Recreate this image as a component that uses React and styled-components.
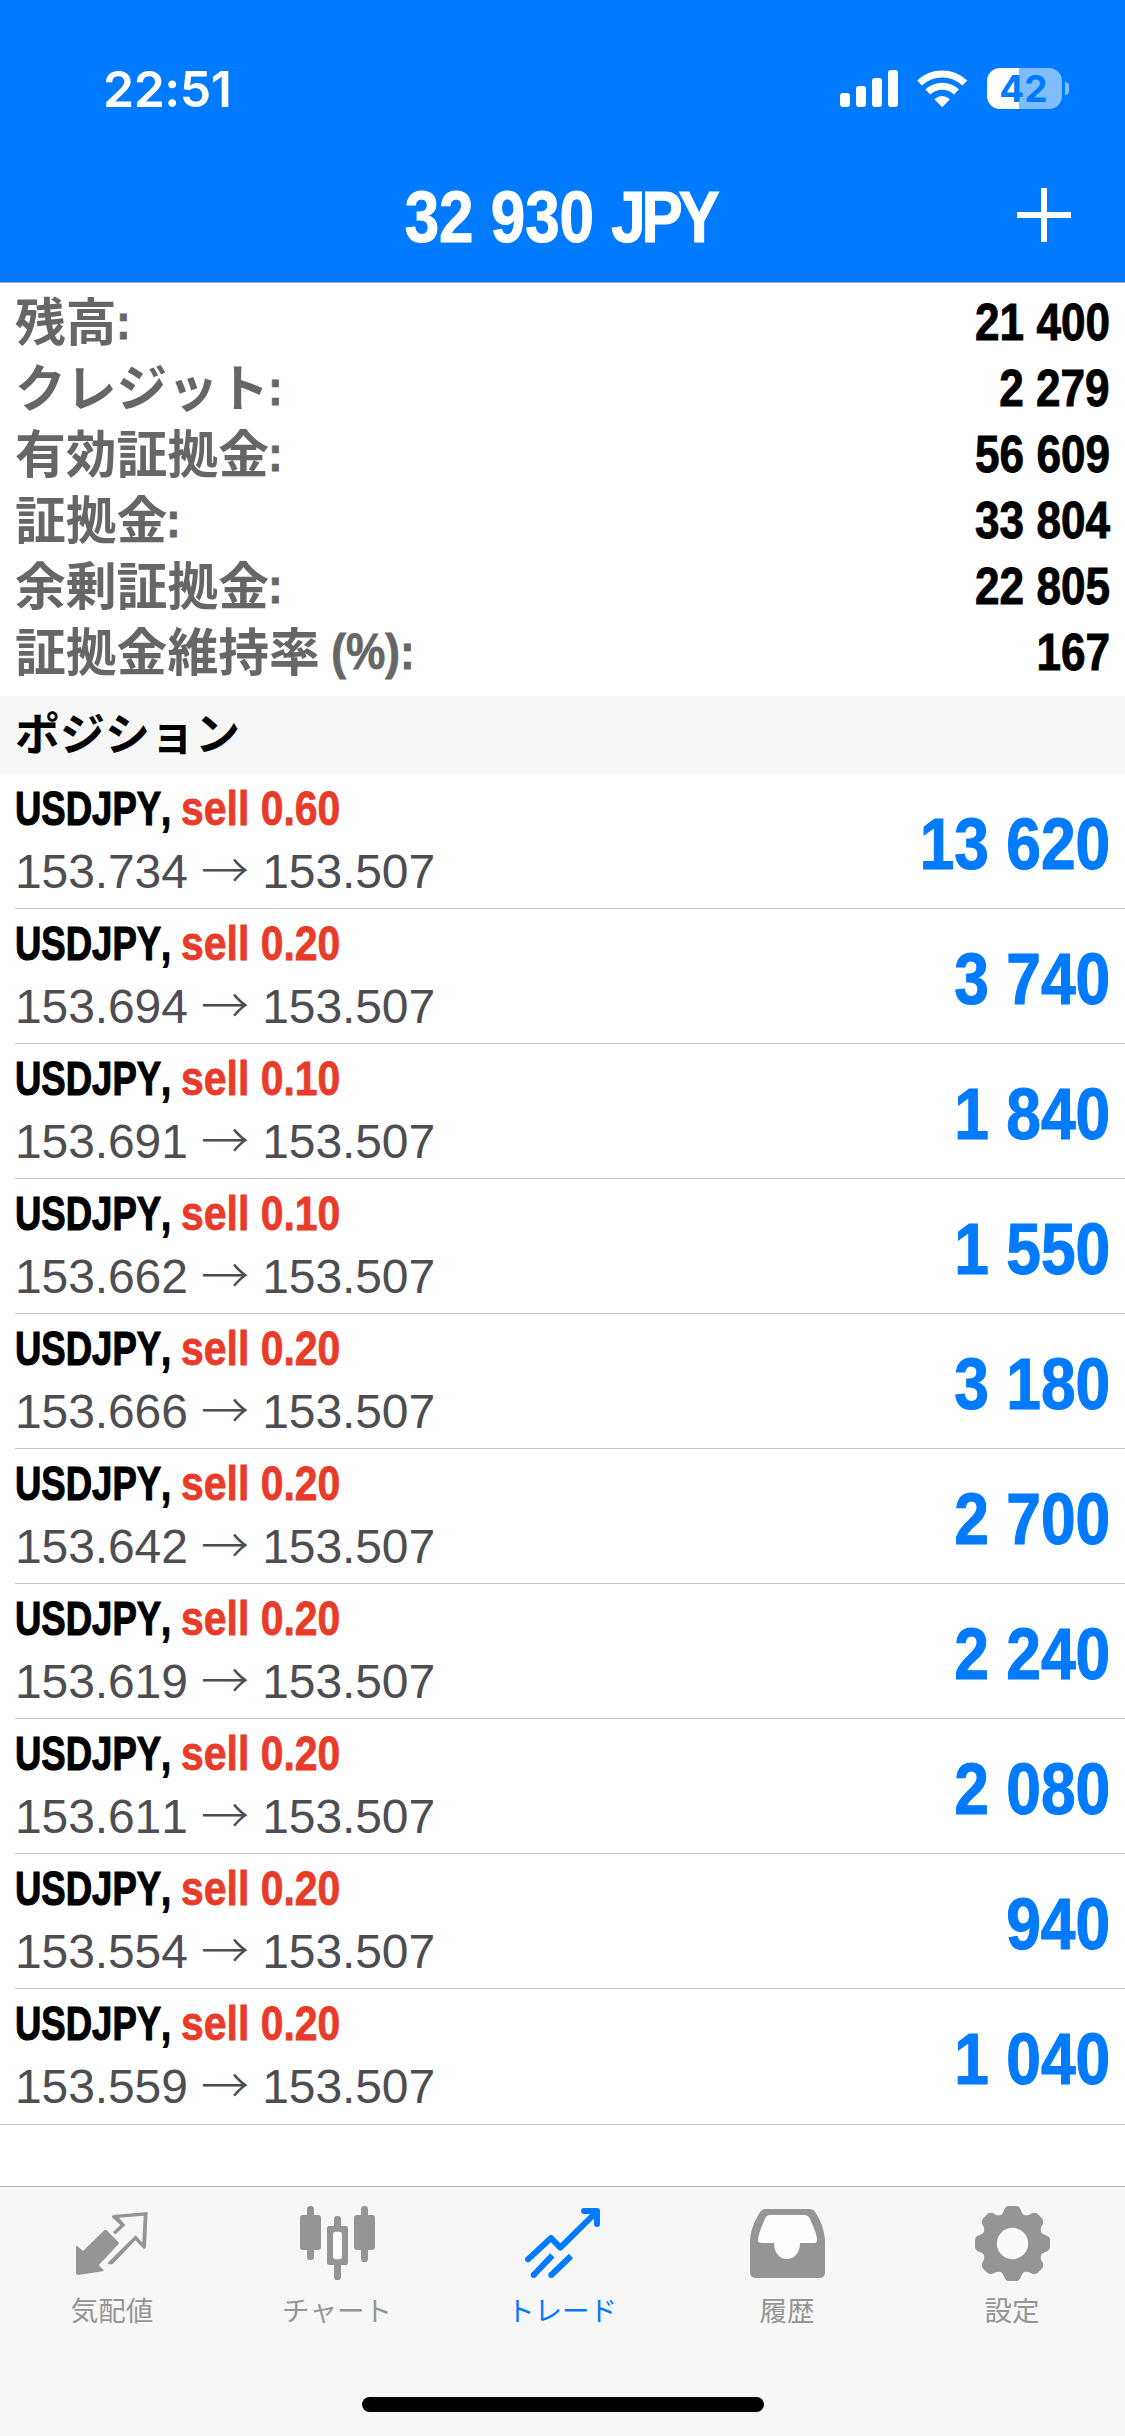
import React from "react";
import styled, { createGlobalStyle } from "styled-components";

const account = [
  { label: "残高", suffix: ":", value: "21 400" },
  { label: "クレジット", suffix: ":", value: "2 279" },
  { label: "有効証拠金", suffix: ":", value: "56 609" },
  { label: "証拠金", suffix: ":", value: "33 804" },
  { label: "余剰証拠金", suffix: ":", value: "22 805" },
  { label: "証拠金維持率", suffix: " (%):", value: "167" }
];

const positions = [
  { volume: "0.60", open: "153.734", profit: "13 620" },
  { volume: "0.20", open: "153.694", profit: "3 740" },
  { volume: "0.10", open: "153.691", profit: "1 840" },
  { volume: "0.10", open: "153.662", profit: "1 550" },
  { volume: "0.20", open: "153.666", profit: "3 180" },
  { volume: "0.20", open: "153.642", profit: "2 700" },
  { volume: "0.20", open: "153.619", profit: "2 240" },
  { volume: "0.20", open: "153.611", profit: "2 080" },
  { volume: "0.20", open: "153.554", profit: "940" },
  { volume: "0.20", open: "153.559", profit: "1 040" }
];

const GlobalStyle = createGlobalStyle`
  body {
    margin: 0;
    background-color: #fff;
  }

  * {
    box-sizing: border-box;
  }
`;

const SignalIcon = () => (
  <svg width="58" height="37" viewBox="0 0 58 37" fill="#fff">
    <rect x="0" y="23" width="10" height="14" rx="3" />
    <rect x="16" y="16" width="10" height="21" rx="3" />
    <rect x="32" y="8" width="10" height="29" rx="3" />
    <rect x="48" y="0" width="10" height="37" rx="3" />
  </svg>
);

const WifiIcon = () => (
  <svg width="51" height="38" viewBox="0 0 153 114" fill="none" stroke="#fff">
    <path d="M7.5 39A99 99 0 0 1 143.5 39" strokeWidth="21" />
    <path d="M32.5 66A62 62 0 0 1 118.5 66" strokeWidth="21" />
    <path
      d="M75.5 109L55 88Q75 72 96 88Z"
      fill="#fff"
      strokeWidth="4"
      strokeLinejoin="round"
    />
  </svg>
);

const QuotesIcon = () => (
  <svg width="75" height="75" viewBox="0 0 225 225" fill="currentColor">
    <path d="M88 73Q91 70 95 73L130 108Q133 112 130 115L71 178L85 191Q87 195 83 196L10 207Q3 207 3 200V122Q5 118 9 122L24 135Z" />
    <path d="M114 27L218 18L213 124Q211 129 206 128L181 103L114 173Q107 178 97 172L182 88L202 110L206 29L132 35L151 57L122 85Q117 85 114 78L136 57L111 34Q110 30 114 27Z" />
  </svg>
);

const ChartIcon = () => (
  <svg width="75" height="75" viewBox="0 0 225 225" fill="currentColor">
    <rect x="21" y="0" width="21" height="162" rx="10" />
    <rect x="0" y="27" width="63" height="105" rx="9" />
    <rect x="102" y="30" width="21" height="192" rx="10" />
    <rect x="81" y="60" width="63" height="117" rx="7" />
    <rect x="99" y="77" width="27" height="83" rx="9" fill="#fff" />
    <rect x="183" y="0" width="21" height="168" rx="10" />
    <rect x="162" y="27" width="63" height="105" rx="9" />
  </svg>
);

const TradeIcon = () => (
  <svg
    width="75"
    height="75"
    viewBox="0 0 225 225"
    fill="none"
    stroke="currentColor"
    strokeWidth="18"
  >
    <path
      d="M9 160L78 96L106 125L210 22M177 15H216V54"
      strokeLinecap="round"
      strokeLinejoin="round"
    />
    <path d="M26 207L82 148M79 207L138 150" />
    <circle cx="26" cy="207" r="9" fill="currentColor" stroke="none" />
    <circle cx="79" cy="207" r="9" fill="currentColor" stroke="none" />
  </svg>
);

const HistoryIcon = () => (
  <svg width="75" height="75" viewBox="0 0 225 225">
    <path
      fill="currentColor"
      d="M48 9H180Q190 9 195 17C213 45 225 75 225 110V199Q225 216 208 216H17Q0 216 0 199V110C0 75 13 45 31 17Q37 9 48 9Z"
    />
    <path
      fill="#fdfdfd"
      d="M60 27H162Q174 27 179 37C188 58 198 78 201 97Q203 111 192 111H150C150 142 132 159 111 159C90 159 72 142 72 111H35Q22 111 24 100C27 78 37 58 45 38Q49 27 60 27Z"
    />
  </svg>
);

const SettingsIcon = () => (
  <svg width="75" height="75" viewBox="0 0 225 225" fill="currentColor">
    {[0, 90, 180, 270].map(angle => (
      <path
        key={angle}
        transform={`rotate(${angle} 112.5 112.5)`}
        d="M104 118V0H124Q131 0 135 7L139 16Q142 24 147 27Q156 29 163 26Q172 19 181 21Q187 22 190 26L199 35Q203 38 204 44Q206 53 199 62Q196 69 198 78Q201 83 209 86L218 90Q225 94 225 101V118Z"
      />
    ))}
    <circle cx="112.5" cy="112.5" r="47" fill="#fafafa" />
  </svg>
);

const tabs = [
  { label: "気配値", Icon: QuotesIcon },
  { label: "チャート", Icon: ChartIcon },
  { label: "トレード", Icon: TradeIcon, active: true },
  { label: "履歴", Icon: HistoryIcon },
  { label: "設定", Icon: SettingsIcon }
];

const App = () => (
  <Screen>
    <GlobalStyle />
    <Header>
      <StatusBar>
        <Time>22:51</Time>
        <StatusIcons>
          <SignalIcon />
          <WifiIcon />
          <Battery>
            <BatteryBody>42</BatteryBody>
            <BatteryCap />
          </Battery>
        </StatusIcons>
      </StatusBar>
      <NavBar>
        <Title>
          32 930 <Currency>JPY</Currency>
        </Title>
        <AddButton aria-label="add">
          <svg width="54" height="54" viewBox="0 0 54 54">
            <path d="M27 0V54M0 27H54" stroke="#fff" strokeWidth="6" />
          </svg>
        </AddButton>
      </NavBar>
    </Header>
    <Account>
      {account.map(({ label, suffix, value }) => (
        <AccountRow key={label}>
          <Label>
            {label}
            <Suffix>{suffix}</Suffix>
          </Label>
          <Value>{value}</Value>
        </AccountRow>
      ))}
    </Account>
    <SectionTitle>ポジション</SectionTitle>
    <Positions>
      {positions.map(({ volume, open, profit }) => (
        <Position key={open}>
          <div>
            <Deal>
              <Symbol>USDJPY,</Symbol>
              <Side>sell {volume}</Side>
            </Deal>
            <Prices>
              {open} <Arrow>→</Arrow> 153.507
            </Prices>
          </div>
          <Profit>{profit}</Profit>
        </Position>
      ))}
    </Positions>
    <TabBar>
      <Tabs>
        {tabs.map(({ label, Icon, active }) => (
          <Tab key={label} $active={active}>
            <Icon />
            <TabLabel>{label}</TabLabel>
          </Tab>
        ))}
      </Tabs>
      <HomeIndicator />
    </TabBar>
  </Screen>
);

const Screen = styled.div`
  width: 1125px;
  height: 2436px;
  display: flex;
  flex-direction: column;
  overflow: hidden;
  background-color: #fff;
  font-family: "Liberation Sans", "Noto Sans CJK JP", sans-serif;
  font-kerning: none;
`;

const Header = styled.header`
  height: 283px;
  flex: none;
  background-color: #007aff;
  border-bottom: 1px solid #a7aaae;
  color: #fff;
`;

const StatusBar = styled.div`
  height: 148px;
  display: flex;
  justify-content: space-between;
  padding: 68px 56px 0 103px;
`;

const Time = styled.span`
  font-family: Inter, sans-serif;
  font-size: 50px;
  font-weight: 600;
  line-height: 42px;
  letter-spacing: -0.5px;
`;

const StatusIcons = styled.div`
  height: 41px;
  display: flex;
  align-items: center;
  gap: 19px;
`;

const Battery = styled.div`
  display: flex;
  align-items: center;
  gap: 3px;
`;

const BatteryBody = styled.div`
  width: 75px;
  height: 41px;
  padding-right: 2px;
  border-radius: 13px;
  background: linear-gradient(90deg, #fff 32px, #80bdff 32px);
  color: #007aff;
  font-family: Inter, sans-serif;
  font-size: 37px;
  font-weight: 700;
  line-height: 41px;
  text-align: center;
`;

const BatteryCap = styled.div`
  width: 4px;
  height: 13px;
  border-radius: 0 4px 4px 0;
  background-color: #80bdff;
`;

const NavBar = styled.div`
  display: grid;
  grid-template-columns: 1fr auto 1fr;
  align-items: center;
  height: 134px;
  padding: 0 54px;
`;

const Title = styled.h1`
  grid-column: 2;
  margin: 0;
  padding: 5px 5px 0 0;
  font-size: 72px;
  font-weight: 700;
  line-height: 129px;
  transform: scaleX(0.86);
  -webkit-text-stroke: 1.1px currentColor;
`;

const Currency = styled.span`
  letter-spacing: -5px;
`;

const AddButton = styled.button`
  justify-self: end;
  height: 54px;
  padding: 0;
  border: 0;
  background: none;
`;

const Account = styled.section`
  height: 413px;
  flex: none;
  padding: 7px 15px 0;
`;

const AccountRow = styled.div`
  height: 66px;
  display: flex;
  justify-content: space-between;
  line-height: 66px;
`;

const Label = styled.span`
  display: flex;
  color: #666;
  font-family: "Noto Sans CJK JP", sans-serif;
  font-size: 50.8px;
  font-weight: 700;
  line-height: 59px;
`;

const Suffix = styled.span`
  margin-left: -1px;
  font-family: "Liberation Sans", sans-serif;
  line-height: 64px;
  white-space: pre;
  transform: scaleX(0.87);
  transform-origin: left;
  -webkit-text-stroke: 0.8px currentColor;
`;

const Value = styled.span`
  color: #000;
  font-size: 51px;
  font-weight: 700;
  transform: scaleX(0.865);
  transform-origin: right;
  -webkit-text-stroke: 0.9px currentColor;
`;

const SectionTitle = styled.h2`
  height: 78px;
  flex: none;
  margin: 0;
  padding-left: 15px;
  background-color: #f7f7f7;
  font-family: "Noto Sans CJK JP", sans-serif;
  font-size: 45px;
  font-weight: 700;
  line-height: 71px;
`;

const Positions = styled.section`
  flex: 1;
`;

const Position = styled.div`
  height: 135px;
  display: flex;
  justify-content: space-between;
  margin-left: 15px;
  padding-right: 15px;
  border-bottom: 1px solid #c6c6c8;

  &:last-child {
    height: 136px;
    margin-left: 0;
    padding-left: 15px;
  }
`;

const Deal = styled.div`
  height: 66px;
  display: flex;
  font-size: 49px;
  font-weight: 700;
  line-height: 68px;
  -webkit-text-stroke: 0.8px currentColor;
`;

const Symbol = styled.span`
  width: 166px;
  white-space: nowrap;
  transform: scaleX(0.745);
  transform-origin: left;
  -webkit-text-stroke: 1.2px currentColor;
`;

const Side = styled.span`
  color: #e83b2a;
  white-space: nowrap;
  transform: scaleX(0.835);
  transform-origin: left;
`;

const Prices = styled.div`
  height: 62px;
  color: #4d4d52;
  font-size: 48px;
  line-height: 63px;
  letter-spacing: -0.1px;
`;

const Arrow = styled.span`
  font-family: "Noto Sans CJK JP", sans-serif;
  font-weight: 300;
  line-height: 1;
`;

const Profit = styled.span`
  padding-top: 4px;
  color: #007aff;
  font-size: 72px;
  font-weight: 700;
  line-height: 132px;
  transform: scaleX(0.865);
  transform-origin: right;
  -webkit-text-stroke: 1.1px currentColor;
`;

const TabBar = styled.nav`
  height: 250px;
  flex: none;
  display: flex;
  flex-direction: column;
  justify-content: space-between;
  align-items: center;
  padding-bottom: 24px;
  border-top: 1px solid #b2b2b2;
  background-color: #f7f7f7;
`;

const Tabs = styled.div`
  width: 100%;
  display: grid;
  grid-template-columns: repeat(5, 1fr);
`;

const Tab = styled.div`
  display: flex;
  flex-direction: column;
  align-items: center;
  padding-top: 19px;
  color: ${({ $active }) => ($active ? "#007aff" : "#959595")};

  svg {
    display: block;
  }
`;

const TabLabel = styled.span`
  margin-top: 8px;
  padding-right: 1px;
  font-family: "Noto Sans CJK JP", sans-serif;
  font-size: 27.5px;
  line-height: 40px;
`;

const HomeIndicator = styled.div`
  width: 402px;
  height: 15px;
  border-radius: 8px;
  background-color: #000;
`;

export default App;
